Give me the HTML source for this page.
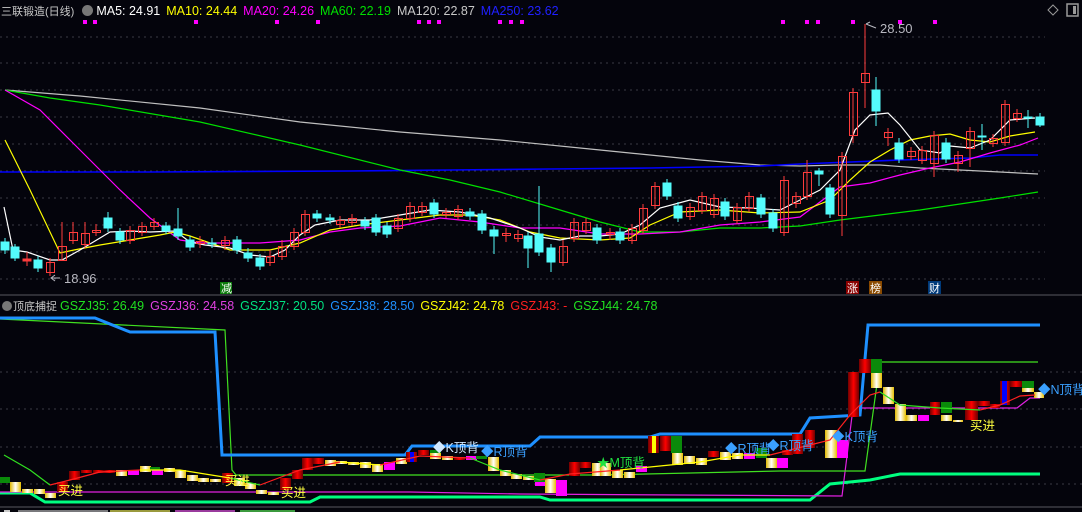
<!DOCTYPE html>
<html><head><meta charset="utf-8"><style>
html,body{margin:0;padding:0;background:#04040c;}
body{width:1082px;height:512px;overflow:hidden;position:relative;font-family:"Liberation Sans","Noto Sans CJK SC",sans-serif;}
svg{position:absolute;left:0;top:0;}
.lg{position:absolute;font-size:12.5px;white-space:nowrap;}
.lg span{margin-right:6px;}
</style></head><body>
<svg width="1082" height="512" viewBox="0 0 1082 512">
<defs>
<linearGradient id="Y" x1="0" x2="1" y1="0" y2="0"><stop offset="0" stop-color="#e0b800"/><stop offset=".5" stop-color="#ffffff"/><stop offset="1" stop-color="#e8c000"/></linearGradient>
<linearGradient id="R" x1="0" x2="1" y1="0" y2="0"><stop offset="0" stop-color="#700000"/><stop offset=".5" stop-color="#ff0000"/><stop offset="1" stop-color="#700000"/></linearGradient>
</defs>
<g stroke="#3a3a44" stroke-dasharray="2,4" stroke-width="1">
<line x1="0" y1="37" x2="1045" y2="37"/><line x1="0" y1="63" x2="1045" y2="63"/><line x1="0" y1="90" x2="1045" y2="90"/><line x1="0" y1="117" x2="1045" y2="117"/><line x1="0" y1="144" x2="1045" y2="144"/><line x1="0" y1="171" x2="1045" y2="171"/><line x1="0" y1="198" x2="1045" y2="198"/><line x1="0" y1="225" x2="1045" y2="225"/><line x1="0" y1="252" x2="1045" y2="252"/><line x1="0" y1="279" x2="1045" y2="279"/>
<line x1="0" y1="372" x2="1082" y2="372"/><line x1="0" y1="409" x2="1082" y2="409"/><line x1="0" y1="447" x2="1082" y2="447"/><line x1="0" y1="484" x2="1082" y2="484"/>
</g>
<line x1="0" y1="295" x2="1082" y2="295" stroke="#3c3c44" stroke-width="1.5"/>
<line x1="0" y1="507" x2="1082" y2="507" stroke="#3c3c44" stroke-width="1.5"/>
<g fill="#ff00ff">
<rect x="83" y="20" width="4" height="4"/><rect x="93" y="20" width="4" height="4"/><rect x="194" y="20" width="4" height="4"/><rect x="275" y="20" width="4" height="4"/><rect x="316" y="20" width="4" height="4"/><rect x="417" y="20" width="4" height="4"/><rect x="427" y="20" width="4" height="4"/><rect x="437" y="20" width="4" height="4"/><rect x="498" y="20" width="4" height="4"/><rect x="509" y="20" width="4" height="4"/><rect x="520" y="20" width="4" height="4"/><rect x="781" y="20" width="4" height="4"/><rect x="805" y="20" width="4" height="4"/><rect x="816" y="20" width="4" height="4"/><rect x="851" y="20" width="4" height="4"/><rect x="898" y="20" width="4" height="4"/><rect x="933" y="20" width="4" height="4"/>
</g>
<g fill="none" stroke-width="1.2">
<polyline stroke="#c0c0c0" points="5,90 80,96 200,108 300,122 400,132 500,140 600,150 700,160 760,165 800,166 840,165 880,165 920,168 960,170 1000,172 1038,174"/>
<polyline stroke="#0000ff" stroke-width="1.6" points="0,172 150,172 350,171 450,170 550,169 650,168 760,166 800,164 900,160 970,158 1000,155 1038,155"/>
<polyline stroke="#00e000" points="5,90 50,98 100,105 200,122 300,145 400,170 450,180 500,192 560,210 600,222 640,232 680,232 720,228 760,228 800,226 840,220 880,215 920,210 960,204 1000,198 1038,192"/>
<polyline stroke="#ff00ff" points="5,90 40,110 80,150 120,190 150,218 180,240 200,243 260,243 300,240 330,232 360,228 400,226 440,218 480,222 520,228 560,228 600,234 640,234 680,232 720,225 760,222 800,217 840,187 870,183 900,175 930,168 960,162 990,153 1020,145 1038,138"/>
<polyline stroke="#ffff00" points="5,140 30,190 60,253 74,250 100,245 130,240 160,235 175,232 190,236 230,250 270,250 300,243 330,230 360,225 400,220 440,215 470,215 500,220 530,232 560,238 600,240 630,238 650,225 680,212 720,210 760,213 800,212 830,200 850,180 870,162 890,150 910,140 930,136 950,134 970,140 990,142 1010,136 1035,132"/>
<polyline stroke="#ffffff" points="4,207 13,250 27,252 50,260 62,260 80,250 100,238 110,232 130,231 150,232 175,231 190,242 205,245 230,248 250,255 270,257 285,250 300,235 315,225 340,220 370,220 400,215 430,210 460,212 490,218 520,228 540,237 560,240 580,236 600,236 620,234 640,225 660,208 690,200 720,207 750,208 780,210 800,200 820,190 840,170 855,130 870,115 888,113 900,125 920,150 940,153 950,146 970,148 990,140 1010,120 1035,118"/>
</g>
<g stroke-width="1">
<g stroke="#54fcfc" fill="#54fcfc">
<line x1="5" y1="238" x2="5" y2="254"/><rect x="1" y="242" width="8" height="8"/>
<line x1="15" y1="244" x2="15" y2="261"/><rect x="11" y="247" width="8" height="11"/>
<line x1="38" y1="256" x2="38" y2="272"/><rect x="34" y="260" width="8" height="8"/>
<line x1="108" y1="212" x2="108" y2="232"/><rect x="104" y="218" width="8" height="10"/>
<line x1="120" y1="228" x2="120" y2="244"/><rect x="116" y="232" width="8" height="8"/>
<line x1="166" y1="222" x2="166" y2="234"/><rect x="162" y="226" width="8" height="5"/>
<line x1="178" y1="208" x2="178" y2="240"/><rect x="174" y="229" width="8" height="7"/>
<line x1="190" y1="236" x2="190" y2="251"/><rect x="186" y="240" width="8" height="7"/>
<line x1="212" y1="238" x2="212" y2="248"/><rect x="208" y="243" width="8" height="1"/>
<line x1="237" y1="236" x2="237" y2="254"/><rect x="233" y="240" width="8" height="10"/>
<line x1="248" y1="248" x2="248" y2="262"/><rect x="244" y="253" width="8" height="5"/>
<line x1="260" y1="254" x2="260" y2="270"/><rect x="256" y="258" width="8" height="8"/>
<line x1="317" y1="210" x2="317" y2="222"/><rect x="313" y="214" width="8" height="4"/>
<line x1="330" y1="214" x2="330" y2="224"/><rect x="326" y="218" width="8" height="2"/>
<line x1="365" y1="217" x2="365" y2="230"/><rect x="361" y="221" width="8" height="5"/>
<line x1="376" y1="214" x2="376" y2="236"/><rect x="372" y="218" width="8" height="14"/>
<line x1="387" y1="222" x2="387" y2="238"/><rect x="383" y="226" width="8" height="8"/>
<line x1="434" y1="199" x2="434" y2="218"/><rect x="430" y="203" width="8" height="11"/>
<line x1="470" y1="208" x2="470" y2="220"/><rect x="466" y="212" width="8" height="4"/>
<line x1="482" y1="210" x2="482" y2="234"/><rect x="478" y="214" width="8" height="16"/>
<line x1="494" y1="226" x2="494" y2="254"/><rect x="490" y="230" width="8" height="6"/>
<line x1="528" y1="232" x2="528" y2="268"/><rect x="524" y="236" width="8" height="12"/>
<line x1="539" y1="186" x2="539" y2="256"/><rect x="535" y="234" width="8" height="18"/>
<line x1="551" y1="244" x2="551" y2="272"/><rect x="547" y="248" width="8" height="14"/>
<line x1="597" y1="224" x2="597" y2="244"/><rect x="593" y="228" width="8" height="12"/>
<line x1="620" y1="228" x2="620" y2="244"/><rect x="616" y="232" width="8" height="8"/>
<line x1="667" y1="179" x2="667" y2="200"/><rect x="663" y="183" width="8" height="13"/>
<line x1="678" y1="202" x2="678" y2="222"/><rect x="674" y="206" width="8" height="12"/>
<line x1="725" y1="198" x2="725" y2="220"/><rect x="721" y="202" width="8" height="14"/>
<line x1="761" y1="194" x2="761" y2="218"/><rect x="757" y="198" width="8" height="16"/>
<line x1="773" y1="209" x2="773" y2="232"/><rect x="769" y="213" width="8" height="15"/>
<line x1="819" y1="168" x2="819" y2="186"/><rect x="815" y="171" width="8" height="3"/>
<line x1="830" y1="184" x2="830" y2="218"/><rect x="826" y="188" width="8" height="26"/>
<line x1="876" y1="77" x2="876" y2="126"/><rect x="872" y="90" width="8" height="21"/>
<line x1="899" y1="138" x2="899" y2="163"/><rect x="895" y="143" width="8" height="16"/>
<line x1="946" y1="138" x2="946" y2="163"/><rect x="942" y="143" width="8" height="16"/>
<line x1="982" y1="124" x2="982" y2="150"/><rect x="978" y="136" width="8" height="1"/>
<line x1="1028" y1="110" x2="1028" y2="128"/><rect x="1024" y="117" width="8" height="1"/>
<line x1="1040" y1="113" x2="1040" y2="127"/><rect x="1036" y="117" width="8" height="8"/>
</g>
<g stroke="#ff3c3c" fill="none">
<line x1="27" y1="252" x2="27" y2="266"/><rect x="23" y="259" width="8" height="2" fill="#ff3c3c"/>
<line x1="50" y1="258" x2="50" y2="276"/><rect x="46.5" y="262.5" width="8" height="10"/>
<line x1="62" y1="222" x2="62" y2="260"/><rect x="58.5" y="246.5" width="8" height="14"/>
<line x1="73" y1="222" x2="73" y2="244"/><rect x="69.5" y="232.5" width="8" height="8"/>
<line x1="85" y1="222" x2="85" y2="248"/><rect x="81.5" y="233.5" width="8" height="11"/>
<line x1="96" y1="224" x2="96" y2="236"/><rect x="92.5" y="230.5" width="8" height="2"/>
<line x1="130" y1="226" x2="130" y2="244"/><rect x="126.5" y="230.5" width="8" height="10"/>
<line x1="142" y1="222" x2="142" y2="236"/><rect x="138.5" y="226.5" width="8" height="6"/>
<line x1="154" y1="218" x2="154" y2="230"/><rect x="150.5" y="222.5" width="8" height="4"/>
<line x1="200" y1="236" x2="200" y2="248"/><rect x="196.5" y="241.5" width="8" height="2"/>
<line x1="225" y1="236" x2="225" y2="250"/><rect x="221.5" y="240.5" width="8" height="5"/>
<line x1="270" y1="250" x2="270" y2="266"/><rect x="266.5" y="256.5" width="8" height="6"/>
<line x1="282" y1="240" x2="282" y2="260"/><rect x="278.5" y="246.5" width="8" height="10"/>
<line x1="294" y1="228" x2="294" y2="250"/><rect x="290.5" y="232.5" width="8" height="14"/>
<line x1="305" y1="210" x2="305" y2="236"/><rect x="301.5" y="214.5" width="8" height="18"/>
<line x1="340" y1="216" x2="340" y2="228"/><rect x="336.5" y="220.5" width="8" height="4"/>
<line x1="352" y1="214" x2="352" y2="226"/><rect x="348.5" y="218.5" width="8" height="4"/>
<line x1="398" y1="214" x2="398" y2="232"/><rect x="394.5" y="218.5" width="8" height="10"/>
<line x1="410" y1="202" x2="410" y2="222"/><rect x="406.5" y="206.5" width="8" height="12"/>
<line x1="422" y1="202" x2="422" y2="216"/><rect x="418.5" y="206.5" width="8" height="6"/>
<line x1="446" y1="208" x2="446" y2="218"/><rect x="442.5" y="212.5" width="8" height="2"/>
<line x1="458" y1="205" x2="458" y2="220"/><rect x="454.5" y="209.5" width="8" height="7"/>
<line x1="506" y1="228" x2="506" y2="242"/><rect x="502.5" y="233.5" width="8" height="2"/>
<line x1="518" y1="230" x2="518" y2="242"/><rect x="514.5" y="234.5" width="8" height="4"/>
<line x1="563" y1="240" x2="563" y2="266"/><rect x="559.5" y="246.5" width="8" height="16"/>
<line x1="574" y1="218" x2="574" y2="242"/><rect x="570.5" y="222.5" width="8" height="16"/>
<line x1="586" y1="218" x2="586" y2="234"/><rect x="582.5" y="222.5" width="8" height="8"/>
<line x1="610" y1="228" x2="610" y2="240"/><rect x="606.5" y="232.5" width="8" height="2"/>
<line x1="632" y1="224" x2="632" y2="244"/><rect x="628.5" y="228.5" width="8" height="12"/>
<line x1="643" y1="204" x2="643" y2="234"/><rect x="639.5" y="208.5" width="8" height="22"/>
<line x1="655" y1="182" x2="655" y2="209"/><rect x="651.5" y="186.5" width="8" height="19"/>
<line x1="690" y1="203" x2="690" y2="220"/><rect x="686.5" y="207.5" width="8" height="9"/>
<line x1="702" y1="192" x2="702" y2="214"/><rect x="698.5" y="196.5" width="8" height="14"/>
<line x1="714" y1="194" x2="714" y2="218"/><rect x="710.5" y="198.5" width="8" height="16"/>
<line x1="737" y1="203" x2="737" y2="224"/><rect x="733.5" y="207.5" width="8" height="13"/>
<line x1="749" y1="192" x2="749" y2="212"/><rect x="745.5" y="196.5" width="8" height="12"/>
<line x1="784" y1="176" x2="784" y2="236"/><rect x="780.5" y="180.5" width="8" height="52"/>
<line x1="796" y1="192" x2="796" y2="208"/><rect x="792.5" y="196.5" width="8" height="7"/>
<line x1="807" y1="160" x2="807" y2="200"/><rect x="803.5" y="172.5" width="8" height="24"/>
<line x1="842" y1="152" x2="842" y2="236"/><rect x="838.5" y="156.5" width="8" height="59"/>
<line x1="853" y1="88" x2="853" y2="143"/><rect x="849.5" y="92.5" width="8" height="43"/>
<line x1="865" y1="24" x2="865" y2="108"/><rect x="861.5" y="73.5" width="8" height="9"/>
<line x1="888" y1="128" x2="888" y2="146"/><rect x="884.5" y="132.5" width="8" height="5"/>
<line x1="911" y1="147" x2="911" y2="160"/><rect x="907.5" y="151.5" width="8" height="5"/>
<line x1="922" y1="146" x2="922" y2="164"/><rect x="918.5" y="150.5" width="8" height="10"/>
<line x1="934" y1="131" x2="934" y2="177"/><rect x="930.5" y="135.5" width="8" height="28"/>
<line x1="958" y1="151" x2="958" y2="172"/><rect x="954.5" y="155.5" width="8" height="8"/>
<line x1="970" y1="127" x2="970" y2="167"/><rect x="966.5" y="131.5" width="8" height="17"/>
<line x1="993" y1="134" x2="993" y2="147"/><rect x="989.5" y="138.5" width="8" height="5"/>
<line x1="1005" y1="100" x2="1005" y2="146"/><rect x="1001.5" y="104.5" width="8" height="38"/>
<line x1="1017" y1="109" x2="1017" y2="122"/><rect x="1013.5" y="113.5" width="8" height="5"/>
</g>
</g>
<g fill="#b8b8c0" font-size="13" font-family="Liberation Sans,sans-serif">
<text x="64" y="283">18.96</text><text x="880" y="33">28.50</text>
</g>
<g stroke="#b8b8c0" fill="none"><polyline points="60,278 52,278"/><polyline points="55,275 51,278 55,281"/><polyline points="866,24 876,28"/><polyline points="866,24 870,22"/></g>
<rect x="220" y="282" width="12" height="12" fill="#0a7a0a"/><text x="221" y="292" fill="#fff" font-size="11">减</text>
<rect x="846" y="281" width="13" height="13" fill="#8a0000"/><text x="847" y="292" fill="#fff" font-size="11">涨</text>
<rect x="869" y="281" width="13" height="13" fill="#8a4a00"/><text x="870" y="292" fill="#fff" font-size="11">榜</text>
<rect x="928" y="281" width="13" height="13" fill="#003a7a"/><text x="929" y="292" fill="#fff" font-size="11">财</text>
<path d="M1053,5 L1058,10 L1053,15 L1048,10 Z" fill="none" stroke="#999"/>
<rect x="1067" y="4" width="11" height="12" fill="none" stroke="#999" stroke-width="1.5"/><rect x="1073" y="6" width="3" height="8" fill="#999"/>

<g fill="none">
<polyline stroke="#00ff80" stroke-width="3" points="0,493 30,493 45,502 310,502 320,497 540,497 550,500 810,500 830,484 870,480 900,474 1040,474"/>
<polyline stroke="#e020e0" stroke-width="1.2" points="0,492 410,492 520,494 842,496 853,408 1017,408 1030,398 1040,398"/>
<polyline stroke="#40e020" stroke-width="1.2" points="0,319 225,330 232,470 236,475 600,475 780,471 865,471 880,362 1038,362"/>
<polyline stroke="#1e90ff" stroke-width="3" points="0,318 95,318 130,332 215,332 222,455 405,455 412,446 530,446 540,437 650,437 660,434 800,434 810,418 860,415 868,325 1040,325"/>
</g>
<g>
<rect x="0" y="477" width="10" height="6" fill="#0a8a0a"/><rect x="10" y="482" width="11" height="10" fill="url(#Y)"/><rect x="22" y="489" width="11" height="4" fill="url(#Y)"/><rect x="34" y="489" width="11" height="5" fill="url(#Y)"/><rect x="45" y="493" width="11" height="5" fill="url(#Y)"/><rect x="57" y="482" width="11" height="10" fill="url(#R)"/><rect x="69" y="471" width="11" height="9" fill="url(#R)"/><rect x="81" y="470" width="11" height="3" fill="url(#R)"/><rect x="93" y="470" width="11" height="3" fill="url(#R)"/><rect x="104" y="470" width="11" height="3" fill="url(#R)"/><rect x="116" y="470" width="11" height="6" fill="url(#Y)"/><rect x="128" y="470" width="11" height="5" fill="#ff00ff"/><rect x="140" y="466" width="11" height="6" fill="url(#Y)"/><rect x="150" y="467" width="10" height="3" fill="#0a8a0a"/><rect x="152" y="470" width="11" height="5" fill="#ff00ff"/><rect x="164" y="468" width="11" height="4" fill="url(#Y)"/><rect x="175" y="470" width="11" height="8" fill="url(#Y)"/><rect x="187" y="475" width="11" height="6" fill="url(#Y)"/><rect x="198" y="478" width="11" height="4" fill="url(#Y)"/><rect x="210" y="479" width="11" height="3" fill="url(#Y)"/><rect x="222" y="473" width="11" height="10" fill="url(#R)"/><rect x="234" y="478" width="11" height="8" fill="url(#Y)"/><rect x="245" y="483" width="11" height="6" fill="url(#Y)"/><rect x="256" y="490" width="11" height="4" fill="url(#Y)"/><rect x="268" y="492" width="11" height="3" fill="url(#Y)"/><rect x="280" y="478" width="11" height="12" fill="url(#R)"/><rect x="292" y="470" width="11" height="9" fill="url(#R)"/><rect x="302" y="458" width="11" height="12" fill="url(#R)"/><rect x="313" y="458" width="11" height="6" fill="url(#R)"/><rect x="325" y="460" width="11" height="6" fill="url(#Y)"/><rect x="336" y="461" width="11" height="3" fill="url(#Y)"/><rect x="348" y="462" width="11" height="3" fill="url(#Y)"/><rect x="360" y="462" width="11" height="6" fill="url(#Y)"/><rect x="372" y="464" width="11" height="8" fill="url(#Y)"/><rect x="384" y="462" width="11" height="8" fill="#ff00ff"/><rect x="396" y="458" width="11" height="6" fill="url(#Y)"/><rect x="406" y="452" width="11" height="10" fill="url(#R)"/><rect x="410" y="452" width="4" height="10" fill="#0000ff"/><rect x="418" y="450" width="11" height="5" fill="url(#R)"/><rect x="430" y="450" width="11" height="3" fill="#0a8a0a"/><rect x="430" y="453" width="11" height="6" fill="url(#Y)"/><rect x="442" y="456" width="11" height="4" fill="url(#Y)"/><rect x="454" y="457" width="11" height="3" fill="url(#R)"/><rect x="466" y="456" width="11" height="4" fill="#ff00ff"/><rect x="476" y="456" width="11" height="3" fill="#0a8a0a"/><rect x="488" y="457" width="11" height="14" fill="url(#Y)"/><rect x="500" y="470" width="11" height="6" fill="url(#Y)"/><rect x="511" y="474" width="11" height="5" fill="url(#Y)"/><rect x="523" y="476" width="11" height="4" fill="url(#Y)"/><rect x="534" y="473" width="11" height="9" fill="#0a8a0a"/><rect x="535" y="482" width="11" height="4" fill="#ff00ff"/><rect x="545" y="479" width="11" height="14" fill="url(#Y)"/><rect x="556" y="480" width="11" height="16" fill="#ff00ff"/><rect x="569" y="462" width="11" height="14" fill="url(#R)"/><rect x="580" y="462" width="11" height="6" fill="url(#R)"/><rect x="592" y="463" width="11" height="13" fill="url(#Y)"/><rect x="600" y="463" width="11" height="13" fill="url(#Y)"/><rect x="612" y="470" width="11" height="8" fill="url(#Y)"/><rect x="624" y="472" width="11" height="6" fill="url(#Y)"/><rect x="636" y="466" width="11" height="6" fill="#ff00ff"/><rect x="648" y="436" width="11" height="17" fill="url(#R)"/><rect x="652" y="436" width="4" height="17" fill="#ffff00"/><rect x="660" y="436" width="11" height="15" fill="url(#R)"/><rect x="671" y="436" width="11" height="17" fill="#0a8a0a"/><rect x="672" y="453" width="11" height="12" fill="url(#Y)"/><rect x="684" y="456" width="11" height="8" fill="url(#Y)"/><rect x="696" y="458" width="11" height="7" fill="url(#Y)"/><rect x="708" y="451" width="11" height="6" fill="url(#R)"/><rect x="720" y="452" width="11" height="8" fill="url(#Y)"/><rect x="732" y="453" width="11" height="6" fill="url(#Y)"/><rect x="744" y="453" width="11" height="6" fill="#ff00ff"/><rect x="756" y="448" width="11" height="10" fill="#0a8a0a"/><rect x="766" y="458" width="11" height="10" fill="url(#Y)"/><rect x="777" y="458" width="11" height="10" fill="#ff00ff"/><rect x="782" y="450" width="11" height="5" fill="url(#R)"/><rect x="792" y="434" width="11" height="20" fill="url(#R)"/><rect x="805" y="430" width="10" height="18" fill="url(#R)"/><rect x="825" y="430" width="12" height="28" fill="url(#Y)"/><rect x="837" y="440" width="11" height="18" fill="#ff00ff"/><rect x="848" y="372" width="11" height="45" fill="url(#R)"/><rect x="859" y="359" width="12" height="14" fill="url(#R)"/><rect x="871" y="359" width="11" height="14" fill="#0a8a0a"/><rect x="871" y="373" width="11" height="15" fill="url(#Y)"/><rect x="883" y="387" width="11" height="17" fill="url(#Y)"/><rect x="895" y="404" width="11" height="17" fill="url(#Y)"/><rect x="906" y="415" width="11" height="6" fill="url(#Y)"/><rect x="918" y="415" width="11" height="6" fill="#ff00ff"/><rect x="930" y="402" width="10" height="13" fill="url(#R)"/><rect x="941" y="402" width="11" height="11" fill="#0a8a0a"/><rect x="941" y="415" width="11" height="6" fill="url(#Y)"/><rect x="953" y="420" width="10" height="2" fill="url(#Y)"/><rect x="965" y="401" width="13" height="19" fill="url(#R)"/><rect x="978" y="401" width="12" height="5" fill="url(#R)"/><rect x="990" y="404" width="10" height="4" fill="url(#R)"/><rect x="1000" y="381" width="10" height="24" fill="url(#R)"/><rect x="1002" y="381" width="5" height="24" fill="#0000ff"/><rect x="1010" y="381" width="12" height="6" fill="url(#R)"/><rect x="1022" y="381" width="12" height="7" fill="#0a8a0a"/><rect x="1022" y="388" width="12" height="4" fill="url(#Y)"/><rect x="1034" y="392" width="10" height="6" fill="url(#Y)"/>
</g>
<g fill="none" stroke-width="1.2">
<polyline stroke="#30e020" points="4,455 30,470 50,485"/>
<polyline stroke="#ff2020" points="50,485 70,480 100,472 140,470"/>
<polyline stroke="#ffff00" points="140,470 180,470 230,478"/>
<polyline stroke="#30e020" points="230,478 260,485"/>
<polyline stroke="#ff2020" points="260,485 300,470 340,462"/>
<polyline stroke="#ffff00" points="340,462 380,465"/>
<polyline stroke="#ff2020" points="380,465 420,456 470,458"/>
<polyline stroke="#30e020" points="470,458 500,470 540,480"/>
<polyline stroke="#ff2020" points="540,480 570,474 620,470"/>
<polyline stroke="#ffff00" points="620,470 660,466 700,462 740,455 770,455"/>
<polyline stroke="#ff2020" points="770,455 810,445 830,440 850,415 870,395 880,392"/>
<polyline stroke="#30e020" points="880,392 900,405 940,408 980,410"/>
<polyline stroke="#ff2020" points="980,410 1000,405 1020,396 1035,395"/>
</g>
<g font-size="12.5" font-family="Liberation Sans,Noto Sans CJK SC,sans-serif">
<text x="58" y="495" fill="#ffff40">买进</text><text x="225" y="485" fill="#ffff40">买进</text><text x="281" y="497" fill="#ffff40">买进</text><text x="970" y="430" fill="#ffff40">买进</text>
<text x="433" y="452" fill="#d0e8ff">◆K顶背</text><text x="481" y="456" fill="#3aa0ff">◆R顶背</text><text x="597" y="467" fill="#20e040">★M顶背</text><text x="725" y="453" fill="#3aa0ff">◆R顶背</text><text x="767" y="450" fill="#3aa0ff">◆R顶背</text><text x="832" y="441" fill="#3aa0ff">◆K顶背</text><text x="1038" y="394" fill="#3aa0ff">◆N顶背</text>
</g>
<g><rect x="4" y="510" width="6" height="2" fill="#c8c8c8"/><rect x="18" y="510" width="90" height="2" fill="#c8c8c8" opacity=".6"/><rect x="110" y="510" width="60" height="2" fill="#ffff60" opacity=".6"/><rect x="175" y="510" width="60" height="2" fill="#ff60ff" opacity=".6"/><rect x="240" y="510" width="55" height="2" fill="#60ff60" opacity=".6"/></g>
</svg>
<div class="lg" style="left:1px;top:3px;">
<span style="color:#c8c8c8;font-size:11px;margin-right:8px">三联锻造(日线)</span><span style="display:inline-block;width:11px;height:11px;border-radius:50%;background:#777;vertical-align:-1px;margin-right:3px"></span><span style="color:#ffffff">MA5: 24.91</span><span style="color:#ffff00">MA10: 24.44</span><span style="color:#ff00ff">MA20: 24.26</span><span style="color:#00e000">MA60: 22.19</span><span style="color:#c8c8c8">MA120: 22.87</span><span style="color:#2020ff">MA250: 23.62</span>
</div>
<div class="lg" style="left:2px;top:298px;">
<span style="display:inline-block;width:10px;height:10px;border-radius:50%;background:#777;vertical-align:-1px;margin-right:1px"></span><span style="color:#c8c8c8;font-size:11px;margin-right:3px">顶底捕捉</span><span style="color:#20e020">GSZJ35: 26.49</span><span style="color:#e040e0">GSZJ36: 24.58</span><span style="color:#00e080">GSZJ37: 20.50</span><span style="color:#1e90ff">GSZJ38: 28.50</span><span style="color:#ffff00">GSZJ42: 24.78</span><span style="color:#ff2020">GSZJ43: -</span><span style="color:#20e020">GSZJ44: 24.78</span>
</div>
</body></html>
